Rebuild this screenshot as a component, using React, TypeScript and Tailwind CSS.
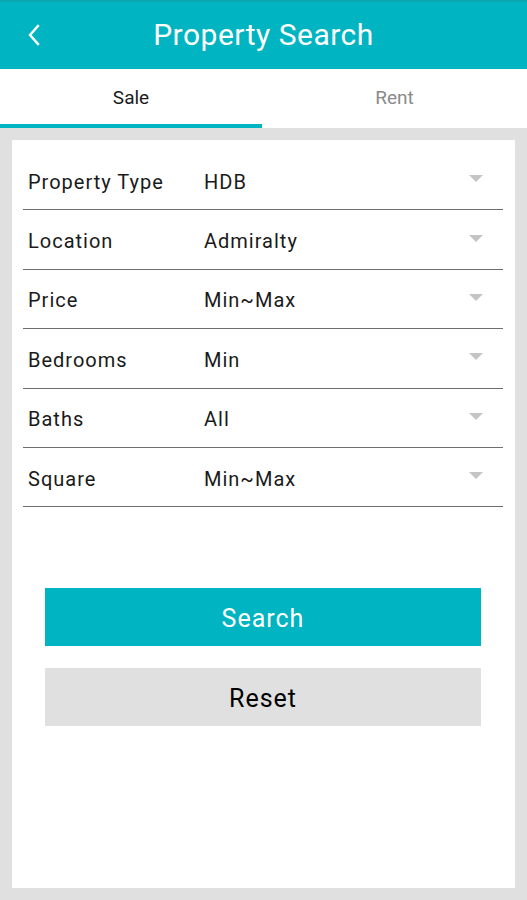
import { useState } from 'react';

const fields = [
  { label: 'Property Type', value: 'HDB' },
  { label: 'Location', value: 'Admiralty' },
  { label: 'Price', value: 'Min~Max' },
  { label: 'Bedrooms', value: 'Min' },
  { label: 'Baths', value: 'All' },
  { label: 'Square', value: 'Min~Max' },
];

export default function App() {
  const [tab, setTab] = useState<'sale' | 'rent'>('sale');

  return (
    <div className="flex h-[900px] w-[527px] flex-col bg-[#e0e0e0] font-['Roboto',sans-serif]">
      <header className="relative flex h-[69px] flex-none items-center justify-center border-t-2 border-[#0aa6b2] bg-[#00b4c1]">
        <button type="button" aria-label="Back" className="absolute left-[24px] top-[20px] flex h-[26px] w-[20px] items-center justify-center">
          <svg width="14" height="22" viewBox="0 0 14 22" fill="none" stroke="white" strokeWidth="2.4" strokeLinecap="square">
            <path d="M11 2 L3 11 L11 20" />
          </svg>
        </button>
        <h1 className="mt-[-2px] text-[30px] font-normal leading-none tracking-[0.5px] text-white">Property Search</h1>
      </header>

      <nav className="flex h-[59px] flex-none bg-white">
        <button
          type="button"
          onClick={() => setTab('sale')}
          className={`flex w-[262px] items-center justify-center border-b-4 pt-[4px] text-[19px] ${
            tab === 'sale' ? 'border-[#00b4c1] text-[#1a1a1a]' : 'border-transparent text-[#8a8a8a]'
          }`}
        >
          Sale
        </button>
        <button
          type="button"
          onClick={() => setTab('rent')}
          className={`flex flex-1 items-center justify-center border-b-4 pt-[4px] text-[19px] ${
            tab === 'rent' ? 'border-[#00b4c1] text-[#1a1a1a]' : 'border-transparent text-[#8a8a8a]'
          }`}
        >
          Rent
        </button>
      </nav>

      <main className="mx-[12px] mb-[12px] mt-[12px] flex flex-1 flex-col bg-white pl-[11px] pr-[12px] pt-[11px]">
        {fields.map((f) => (
          <div key={f.label} className="flex h-[59.4px] items-center border-b border-[#6e6e6e] pt-[3px] tracking-[1px]">
            <span className="w-[181px] pl-[5px] text-[20px] text-[#1a1a1a]">{f.label}</span>
            <span className="flex-1 text-[20px] text-[#1a1a1a]">{f.value}</span>
            <svg width="14" height="7" viewBox="0 0 14 7" className="mb-[6px] mr-[20px]">
              <path d="M0 0 L14 0 L7 7 Z" fill="#c4c4c4" />
            </svg>
          </div>
        ))}

        <div className="mt-[81px] flex flex-col gap-[22px] px-[22px]">
          <button type="button" className="h-[58px] bg-[#00b4c1] pt-[3px] text-[25px] tracking-[1px] text-white">
            Search
          </button>
          <button type="button" className="h-[58px] bg-[#e0e0e0] pt-[3px] text-[25px] tracking-[1px] text-black">
            Reset
          </button>
        </div>
      </main>
    </div>
  );
}
